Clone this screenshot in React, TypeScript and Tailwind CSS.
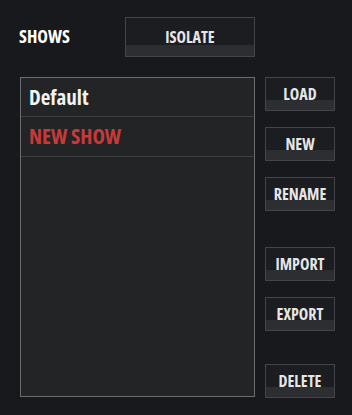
import React from "react";

const font = "font-['Open_Sans','DejaVu_Sans_Condensed',sans-serif] [font-stretch:75%] font-bold";

function Btn({ label, className = "" }: { label: string; className?: string }) {
  return (
    <div
      className={`relative h-[34px] w-[70px] border border-[#444548] bg-[#1c1d20] flex items-center justify-center ${className}`}
    >
      <div className="absolute left-0 right-0 bottom-0 h-[10px] bg-[#2d2e31]" />
      <span className={`relative text-[16px] leading-none text-[#e6e6e6] ${font}`}>{label}</span>
    </div>
  );
}

export default function App() {
  return (
    <div className="w-[352px] h-[415px] bg-[#18191c] overflow-hidden">
      <div className="flex items-center pt-[17px] pl-[19px]">
        <span className={`w-[106px] text-[18px] leading-none text-white -mt-[3px] ${font}`}>SHOWS</span>
        <div className="relative h-[40px] w-[130px] border border-[#444548] bg-[#1c1d20] flex items-center justify-center">
          <div className="absolute left-0 right-0 bottom-0 h-[11px] bg-[#2d2e31]" />
          <span className={`relative text-[16px] leading-none text-[#e6e6e6] ${font}`}>ISOLATE</span>
        </div>
      </div>
      <div className="flex mt-[20px] pl-[20px]">
        <div className="w-[235px] h-[320px] border border-[#6b6c6e] bg-[#222426]">
          <div className="h-[39px] border-b border-[#3d3f41] flex items-center pl-[8px]">
            <span className={`text-[21px] leading-none text-[#f2f2f2] ${font}`}>Default</span>
          </div>
          <div className="h-[40px] border-b border-[#3d3f41] flex items-center pl-[8px]">
            <span className={`text-[21px] leading-none text-[#c83a3a] ${font}`}>NEW SHOW</span>
          </div>
        </div>
        <div className="ml-[10px] flex flex-col">
          <Btn label="LOAD" />
          <Btn label="NEW" className="mt-[16px]" />
          <Btn label="RENAME" className="mt-[16px]" />
          <Btn label="IMPORT" className="mt-[36px]" />
          <Btn label="EXPORT" className="mt-[16px]" />
          <Btn label="DELETE" className="mt-[33px]" />
        </div>
      </div>
    </div>
  );
}
